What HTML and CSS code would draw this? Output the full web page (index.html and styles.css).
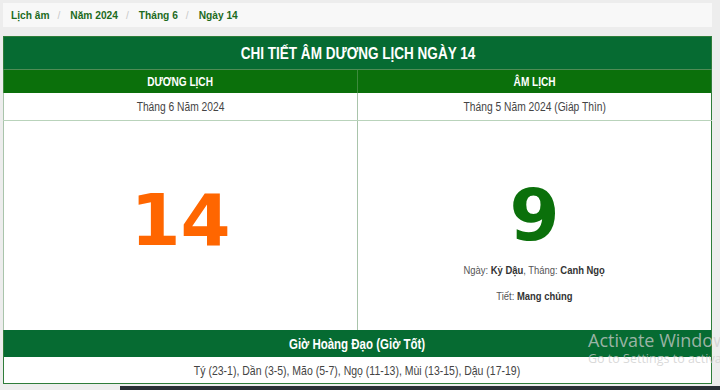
FILE: index.html
```html
<!DOCTYPE html>
<html lang="vi">
<head>
    <meta charset="UTF-8">
    <meta name="viewport" content="width=device-width, initial-scale=1.0">
    <title>Lịch âm ngày 14 tháng 6 năm 2024</title>
    <link rel="stylesheet" href="styles.css">
</head>
<body>
    <div class="page">
        <ul class="breadcrumb">
            <li><a href="#">Lịch âm</a></li>
            <li><a href="#">Năm 2024</a></li>
            <li><a href="#">Tháng 6</a></li>
            <li><a href="#">Ngày 14</a></li>
        </ul>

        <table class="calendar">
            <tr>
                <th colspan="2" class="title"><span class="narrow">CHI TIẾT ÂM DƯƠNG LỊCH NGÀY 14</span></th>
            </tr>
            <tr class="heads">
                <th><span class="narrow">DƯƠNG LỊCH</span></th>
                <th><span class="narrow">ÂM LỊCH</span></th>
            </tr>
            <tr class="months">
                <td><span class="narrow">Tháng 6 Năm 2024</span></td>
                <td><span class="narrow">Tháng 5 Năm 2024 (Giáp Thìn)</span></td>
            </tr>
            <tr class="days">
                <td>
                    <div class="day solar">14</div>
                </td>
                <td>
                    <div class="day lunar">9</div>
                    <p><span class="narrow">Ngày: <b>Kỷ Dậu</b>, Tháng: <b>Canh Ngọ</b></span></p>
                    <p><span class="narrow">Tiết: <b>Mang chủng</b></span></p>
                </td>
            </tr>
            <tr>
                <th colspan="2" class="title hours-title"><span class="narrow">Giờ Hoàng Đạo (Giờ Tốt)</span></th>
            </tr>
            <tr class="hours">
                <td colspan="2"><span class="narrow">Tý (23-1), Dần (3-5), Mão (5-7), Ngọ (11-13), Mùi (13-15), Dậu (17-19)</span></td>
            </tr>
        </table>
    </div>

    <div class="activate">
        <div class="activate-big">Activate Windows</div>
        <div class="activate-small">Go to Settings to activate Windows.</div>
    </div>
    <div class="taskbar"></div>
</body>
</html>
```

FILE: styles.css
```css
body {
    font-family: "Liberation Sans", Arial, sans-serif;
    background: #ededed;
    margin: 0;
    padding: 0;
    overflow: hidden;
}

.page {
    padding: 3px 0 0 3px;
    width: 709px;
}

.breadcrumb {
    list-style: none;
    display: flex;
    align-items: center;
    height: 24px;
    margin: 0 0 9px;
    padding: 0 0 0 8px;
    background: #f8f8f8;
}

.breadcrumb li {
    font-size: 10.2px;
    font-weight: bold;
}

.breadcrumb li + li::before {
    content: "/";
    color: #c8c8c8;
    font-weight: normal;
    padding: 0 10px 0 8px;
}

.breadcrumb a {
    color: #1d6b1d;
    text-decoration: none;
}

/* Arial Narrow look: squeeze the regular face */
.narrow {
    display: inline-block;
    transform: scaleX(0.82);
    white-space: nowrap;
}

.calendar {
    width: 709px;
    border-collapse: collapse;
    border: 1px solid #2f7d3a;
    table-layout: fixed;
    background: #fff;
}

.calendar th,
.calendar td {
    padding: 0;
    text-align: center;
}

.title {
    background: #066b32;
    color: #fff;
    font-size: 16.5px;
    height: 32px;
    border-bottom: 1px solid #4f8c55;
}

.heads th {
    background: #0b700b;
    color: #fff;
    font-size: 12.3px;
    height: 23px;
    border-left: 1px solid #3e8a3e;
}

.months td {
    height: 27px;
    font-size: 12.5px;
    color: #444;
    border-bottom: 1px solid #b9d3bb;
    border-left: 1px solid #a9c4ab;
}

.days td {
    height: 209px;
    vertical-align: top;
    border-left: 1px solid #a9c4ab;
}

.day {
    font-family: "DejaVu Sans", sans-serif;
    font-weight: bold;
    font-size: 72px;
    line-height: 72px;
}

.solar {
    color: #ff6600;
    padding-top: 63px;
}

.lunar {
    color: #0b700b;
    padding-top: 58px;
}

.days p {
    margin: 12px 0 0;
    font-size: 11.5px;
    line-height: 14px;
    color: #555;
}

.days p b {
    color: #333;
}

.hours-title {
    font-size: 14px;
    height: 27px;
    border-bottom: none;
}

.hours td {
    height: 26px;
    font-size: 12.8px;
    color: #444;
}

.activate {
    position: absolute;
    left: 588px;
    top: 328px;
    color: rgba(205, 205, 205, 0.75);
    font-family: "Open Sans", sans-serif;
    white-space: nowrap;
}

.activate-big {
    font-size: 18px;
    line-height: 24px;
}

.activate-small {
    font-size: 12.5px;
    line-height: 14px;
}

.taskbar {
    position: absolute;
    left: 120px;
    top: 386px;
    width: 600px;
    height: 4px;
    background: #2a2f36;
}
```
